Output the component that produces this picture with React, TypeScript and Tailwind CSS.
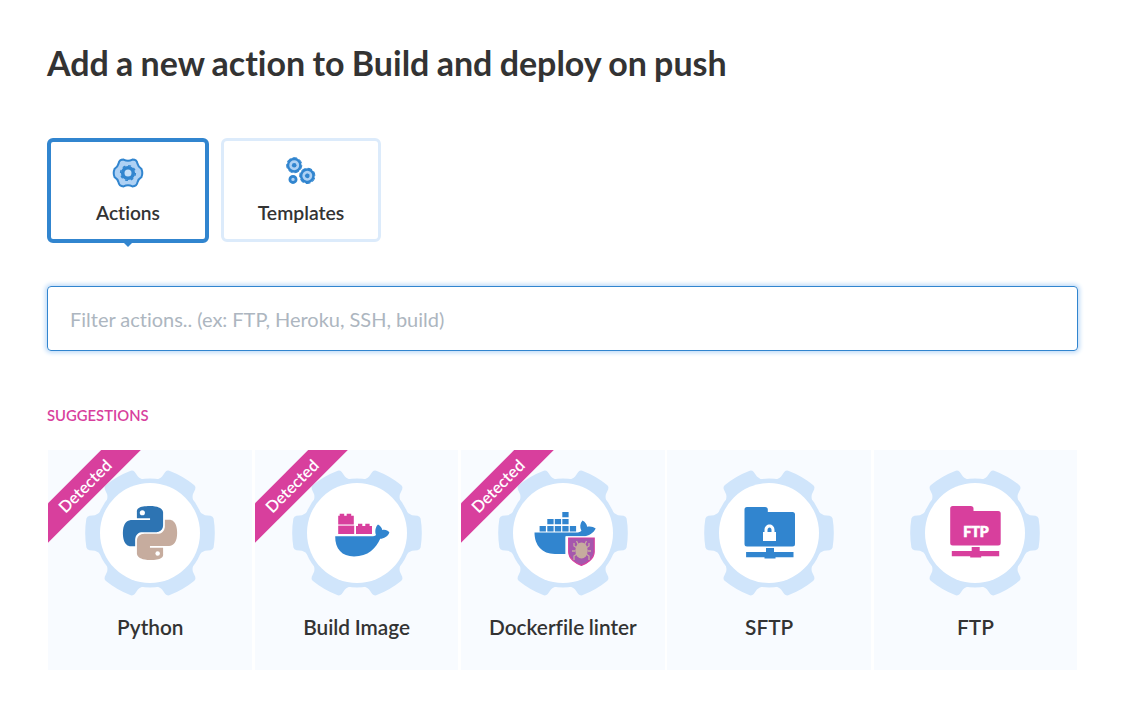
import React from "react";

const GEAR_TOOTH = "M48 -23 Q51.5 -18.6 55 -17.8 L60.5 -17.3 Q63 -16.8 63.6 -14.5 Q66 0 63.6 14.5 Q63 16.8 60.5 17.3 L55 17.8 Q51.5 18.6 48 23 Z";

function Gear({ children }: { children: React.ReactNode }) {
  return (
    <svg className="block h-[130px] w-[130px]" viewBox="-65 -65 130 130">
      <g fill="#d0e5fb">
        <circle r="54.5" />
        {[0, 60, 120, 180, 240, 300].map((a) => (
          <path key={a} d={GEAR_TOOTH} transform={`rotate(${a})`} />
        ))}
      </g>
      <circle r="50" fill="#fff" />
      {children}
    </svg>
  );
}

function PythonIcon() {
  return (
    <g transform="translate(-27 -27) scale(2.25)">
      <path
        fill="#2d74b3"
        d="M14.25.18l.9.2.73.26.59.3.45.32.34.34.25.34.16.33.1.3.04.26.02.2-.01.13V8.5l-.05.63-.13.55-.21.46-.26.38-.3.31-.33.25-.35.19-.35.14-.33.1-.3.07-.26.04-.21.02H8.77l-.69.05-.59.14-.5.22-.41.27-.33.32-.27.35-.2.36-.15.37-.1.35-.07.32-.04.27-.02.21v3.06H3.17l-.21-.03-.28-.07-.32-.12-.35-.18-.36-.26-.36-.36-.35-.46-.32-.59-.28-.73-.21-.88-.14-1.05-.05-1.23.06-1.22.16-1.04.24-.87.32-.71.36-.57.4-.44.42-.33.42-.24.4-.16.36-.1.32-.05.24-.01h.16l.06.01h8.16v-.83H6.18l-.01-2.75-.02-.37.05-.34.11-.31.17-.28.25-.26.31-.23.38-.2.44-.18.51-.15.58-.12.64-.1.71-.06.77-.04.84-.02 1.27.05z"
      />
      <circle cx="8.6" cy="3" r="1.15" fill="#fff" />
      <path
        fill="#c6ac9e"
        d="M21.04 6.11l.28.06.32.12.35.18.36.27.36.35.35.47.32.59.28.73.21.88.14 1.04.05 1.23-.06 1.23-.16 1.04-.24.86-.32.71-.36.57-.4.45-.42.33-.42.24-.4.16-.36.09-.32.05-.24.02-.16-.01h-8.22v.82h5.84l.01 2.76.02.36-.05.34-.11.31-.17.29-.25.25-.31.24-.38.2-.44.17-.51.15-.58.13-.64.09-.71.07-.77.04-.84.01-1.27-.04-1.07-.14-.9-.2-.73-.25-.59-.3-.45-.33-.34-.34-.25-.34-.16-.33-.1-.3-.04-.25-.02-.2.01-.13v-5.34l.05-.64.13-.54.21-.46.26-.38.3-.32.33-.24.35-.2.35-.14.33-.1.3-.06.26-.04.21-.02.13-.01h5.84l.69-.05.59-.14.5-.21.41-.28.33-.32.27-.35.2-.36.15-.36.1-.35.07-.32.04-.28.02-.21V6.07h2.09l.14.01z"
      />
      <circle cx="15.4" cy="21.1" r="1" fill="#fff" />
    </g>
  );
}

function BuildImageIcon() {
  return (
    <>
      <g fill="#d83f9d">
        <path d="M-18.8 -8.5 v-8.7 h1.5 v-2 h4.5 v2 h2.5 v-2 h4.5 v2 h2.6 v8.7z" />
        <path d="M-18.8 1 v-8.4 h16 v8.4z" />
        <path d="M-1 1 v-8 h2 v-2.2 h4.3 v2.2 h3 v-2.2 h4.3 v2.2 h2.4 v8z" />
      </g>
      <path
        fill="#3185cf"
        d="M-21.8 3.3 H14 C17 3.3 18.4 3 19 2 C17.8 -1.5 18.2 -5.8 21 -8.6 C23.8 -7 25 -5 25.2 -3 C28 -3.9 30.8 -2.8 32.4 -.6 C30.8 3.5 27 5.4 23.2 5.8 C19 15.5 11 23.5 -3 23.5 C-15 23.5 -22 16 -21.8 3.3z"
      />
    </>
  );
}

function LinterIcon() {
  return (
    <>
      <g fill="#3185cf">
        <path d="M-.7 -21 h6.3 v5.2 h-6.3z M-15.7 -14 h6.3 v5.2 h-6.3z M-8.2 -14 h6.3 v5.2 h-6.3z M-.7 -14 h6.3 v5.2 h-6.3z M-23.4 -7 h6.3 v5.4 h-6.3z M-15.7 -7 h6.3 v5.4 h-6.3z M-8.2 -7 h6.3 v5.4 h-6.3z M-.7 -7 h6.3 v5.4 h-6.3z M6.8 -7 h6.3 v5.4 h-6.3z" />
        <path d="M-28.5 -.4 H13 C16 -.4 17.4 -1 18.4 -2.2 C16.6 -5.5 16.9 -9.5 19.5 -12.4 C22.5 -10.8 23.9 -8.4 24.1 -6.2 C27 -7 30.5 -6.3 32.7 -4.4 C30.5 .2 27 2 22 3.4 H2.5 V21 H-6 C-20 22 -28.5 13 -28.5 -.4z" />
      </g>
      <path fill="#fff" d="M2.7 3.2 H33 V31 H2.7z" />
      <path fill="#a557ad" stroke="#d83f9d" strokeWidth="1.2" d="M5.7 5 H31.2 V19 C31.2 26 23 31 18.4 32.4 C13 30.5 5.7 26 5.7 19z" />
      <g stroke="#c6ac9e" strokeWidth="1.3" fill="none">
        <path d="M15.5 12 L13.5 8 M21.5 12 L23.5 8 M14 15 L11 13 V10 M23 15 L26 13 V10 M12 18 H9 M25 18 H28 M14 21 L11 23 V27 M23 21 L26 23 V27" />
      </g>
      <ellipse cx="18.5" cy="17.5" rx="6.2" ry="8" fill="#c6ac9e" />
    </>
  );
}

function ServerFolder({ color, children }: { color: string; children: React.ReactNode }) {
  return (
    <>
      <path
        fill={color}
        d="M-22.5 -26 H-4.5 Q-1.7 -26 -1.7 -23.5 V-21 H23 Q25.5 -21 25.5 -18.5 V11 Q25.5 13.5 23 13.5 H-22.5 Q-25 13.5 -25 11 V-23.5 Q-25 -26 -22.5 -26z"
      />
      <path fill={color} d="M-3.5 15 H4.5 V18.9 H24 V24.3 H6 V25.6 H-5 V24.3 H-23.4 V18.9 H-3.5z" />
      {children}
    </>
  );
}

function SftpIcon() {
  return (
    <g transform="translate(.5 0)">
      <ServerFolder color="#3185cf">
        <path fill="#fff" fillRule="evenodd" d="M-6.5 -1 H-5 V-3 C-5 -10.4 5 -10.4 5 -3 V-1 H6.5 V8 H-6.5z M-2 -1 H2 V-3 C2 -6.5 -2 -6.5 -2 -3z" />
      </ServerFolder>
    </g>
  );
}

function FtpIcon() {
  return (
    <g transform="translate(.2 -1)">
      <ServerFolder color="#d83f9d">
        <text x=".7" y="5.2" textAnchor="middle" fill="#fff" stroke="#fff" strokeWidth=".7" fontFamily="Lato, sans-serif" fontWeight="900" fontSize="15" textLength="25.5" lengthAdjust="spacingAndGlyphs">
          FTP
        </text>
      </ServerFolder>
    </g>
  );
}

const COG =
  "M-4.4 -13.4 Q0 -11.2 4.4 -13.4 Q9 -13.3 9.5 -9.2 Q10.3 -6 13.4 -4.2 Q15.2 0 13.4 4.2 Q10.3 6 9.5 9.2 Q9 13.3 4.4 13.4 Q0 11.2 -4.4 13.4 Q-9 13.3 -9.5 9.2 Q-10.3 6 -13.4 4.2 Q-15.2 0 -13.4 -4.2 Q-10.3 -6 -9.5 -9.2 Q-9 -13.3 -4.4 -13.4z";

function ActionsIcon() {
  return (
    <svg className="h-8 w-8" viewBox="-16 -16 32 32">
      <path d={COG} fill="#aed1f4" stroke="#3185cf" strokeWidth="2" />
      <circle r="5.3" fill="#c4dff9" stroke="#3185cf" strokeWidth="3.6" />
      <circle r="7.4" fill="none" stroke="#3185cf" strokeWidth="1.4" strokeDasharray="2.9 2.9" />
    </svg>
  );
}

function SmallCog() {
  return (
    <>
      <circle r="6.2" strokeWidth="2.5" />
      <circle r="7.6" fill="none" strokeWidth="1" strokeDasharray="4.6 2.2" />
      <circle r="2.3" fill="#3185cf" stroke="none" />
    </>
  );
}

function TemplatesIcon() {
  return (
    <svg className="h-8 w-8" viewBox="0 0 32 32">
      <g stroke="#3185cf" fill="#aed1f4">
        <g transform="translate(9.2 9.2)">
          <SmallCog />
        </g>
        <g transform="translate(22.3 19.8) rotate(15)">
          <SmallCog />
        </g>
        <circle cx="8" cy="23.4" r="3.1" strokeWidth="2.8" />
      </g>
    </svg>
  );
}

const CARDS = [
  { label: "Python", detected: true, icon: <PythonIcon /> },
  { label: "Build Image", detected: true, icon: <BuildImageIcon /> },
  { label: "Dockerfile linter", detected: true, icon: <LinterIcon /> },
  { label: "SFTP", detected: false, icon: <SftpIcon /> },
  { label: "FTP", detected: false, icon: <FtpIcon /> },
];

export default function App() {
  return (
    <main className="h-[724px] w-[1126px] overflow-hidden bg-white px-[47px] pt-[39px] font-['Lato',sans-serif] text-[#333] [font-variant-ligatures:none]">
      <h1 className="h-[48px] text-[34px] leading-[48px] font-bold whitespace-nowrap [word-spacing:-1px]">
        Add a new action to Build and deploy on push
      </h1>
      <div className="mt-[51px] flex gap-3">
        <button className="relative flex h-[105px] w-[162px] flex-col items-center rounded-[6px] border-4 border-[#3185cf] pt-[15px]">
          <ActionsIcon />
          <span className="mt-[12px] text-[19.2px] leading-6 font-semibold">Actions</span>
          <svg className="absolute top-[100px] left-[72px] h-[5px] w-[10px]" viewBox="0 0 10 5">
            <path d="M0 0H10L5 5z" fill="#3185cf" />
          </svg>
        </button>
        <button className="flex h-[104px] w-[160px] flex-col items-center rounded-[6px] border-[3px] border-[#dcebfb] pt-[15px]">
          <TemplatesIcon />
          <span className="mt-[13px] text-[19.4px] leading-6 font-semibold">Templates</span>
        </button>
      </div>
      <input
        className="mt-[43px] block h-[65px] w-[1031px] rounded-[4px] border border-[#3185cf] px-[22px] text-[20px] shadow-[0_0_4px_2px_#c2ddf8] outline-none [word-spacing:-0.2px] placeholder:text-[#adb6c0]"
        placeholder="Filter actions.. (ex: FTP, Heroku, SSH, build)"
      />
      <h2 className="mt-[54px] h-5 text-[14.8px] leading-5 font-semibold text-[#d83f9d]">SUGGESTIONS</h2>
      <div className="mt-[25px] ml-[1.4px] grid w-[1029px] grid-cols-5 gap-[2.5px]">
        {CARDS.map((c) => (
          <div key={c.label} className="relative flex h-[220px] flex-col items-center overflow-hidden bg-[#f8fbff] pt-[18px]">
            <Gear>{c.icon}</Gear>
            <div className="mt-[15px] text-[20.8px] leading-7 font-semibold whitespace-nowrap [word-spacing:-0.6px]">{c.label}</div>
            {c.detected && (
              <div className="absolute top-[22px] left-[-46px] flex h-[28px] w-[166px] -rotate-45 items-center justify-center bg-[#d83f9d] pt-px text-[16.3px] font-semibold text-white">
                Detected
              </div>
            )}
          </div>
        ))}
      </div>
    </main>
  );
}
